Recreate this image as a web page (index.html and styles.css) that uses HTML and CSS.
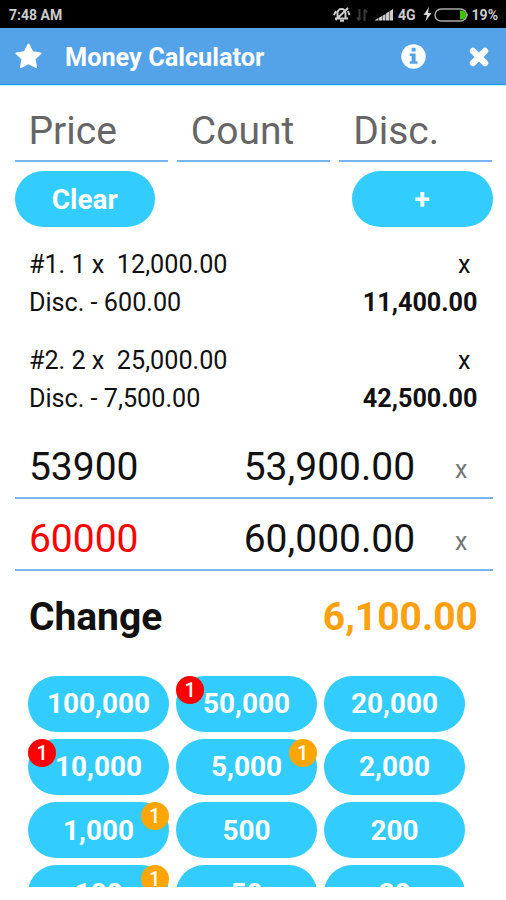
FILE: index.html
```
<!DOCTYPE html>
<html lang="en">
<head>
    <meta charset="UTF-8">
    <meta name="viewport" content="width=device-width, initial-scale=1.0">
    <title>Money Calculator</title>
    <link rel="stylesheet" href="styles.css">
</head>
<body>
    <div class="status-bar">
        <span class="time">7:48 AM</span>
        <div class="status-icons">
            <!-- muted bell -->
            <svg class="icon-mute" width="18" height="17" viewBox="0 0 18 17" fill="none" stroke="#ccc" stroke-width="2">
                <path d="M4.500 12V7a4 4 0 0 1 8 0v5M2 12.500h13M7 14.800h4M2.500 14L15 2M1 9l2-4M16.500 9l-1.500-4"/>
            </svg>
            <!-- mobile data arrows -->
            <svg class="icon-data" width="12" height="14" viewBox="0 0 12 14" fill="none" stroke="#3a3a3a" stroke-width="2">
                <path d="M3.5 1v11M1 9.5l2.5 3M8.500 13V2M11 4.500l-2.500-3"/>
            </svg>
            <!-- signal -->
            <svg class="icon-signal" width="19" height="13" viewBox="0 0 19 13" fill="#ccc">
                <path d="M0 12.500h3.500V10L0 12zM4 12.500h3V8L4 9.700zM7.500 12.500h3V6L7.500 7.700zM11 12.500h3V3.500L11 5.500zM14.500 12.500H18V1l-3.500 2.200z"/>
            </svg>
            <span class="network">4G</span>
            <!-- charging -->
            <svg class="icon-bolt" width="9" height="15" viewBox="0 0 9 15" fill="#ddd">
                <path d="M6 0L.5 8H4l-1.500 6.500L8.500 6H5z"/>
            </svg>
            <svg class="icon-battery" width="35" height="14" viewBox="0 0 35 14">
                <rect x="1" y="1" width="31.500" height="12" rx="6" fill="#000" stroke="#aaa" stroke-width="1.500"/>
                <path d="M26 2.500h1.500a4.500 4.500 0 0 1 0 9H26z" fill="#41c300"/>
                <path d="M33 4.500q1.800 2.500 0 5z" fill="#aaa"/>
            </svg>
            <span class="percent">19%</span>
        </div>
    </div>

    <header class="header">
        <svg class="icon-star" width="27" height="26" viewBox="0 0 27 26" fill="#fff">
            <path d="M13.500 0.500c.5 0 .8.300 1 .8l3.500 7 7.600 1.100c1 .2 1.300.8.600 1.500l-5.600 5.400 1.400 7.800c.1.900-.5 1.300-1.300.9l-7.200-3.700-7.200 3.700c-.8.400-1.400 0-1.300-.9l1.400-7.800-5.600-5.400c-.7-.7-.4-1.300.6-1.500L9 8.300l3.500-7c.2-.5.5-.8 1-.8z"/>
        </svg>
        <h1 class="title">Money Calculator</h1>
        <svg class="icon-info" width="25" height="25" viewBox="0 0 25 25">
            <circle cx="12.500" cy="12.500" r="12.200" fill="#fff"/>
            <path d="M10.600 3.800h4v3.600h-4zM8.700 9.600h5.900v7.700h1.900v2.500H8.700v-2.500h1.900v-5.200H8.700z" fill="#54a3e8"/>
        </svg>
        <svg class="icon-close" width="20" height="20" viewBox="0 0 20 20">
            <path d="M4 4l12 12M16 4L4 16" stroke="#fff" stroke-width="6.400" stroke-linecap="round"/>
        </svg>
    </header>

    <main class="content">
        <div class="inputs">
            <div class="input">Price</div>
            <div class="input">Count</div>
            <div class="input">Disc.</div>
        </div>

        <div class="actions">
            <button class="btn">Clear</button>
            <button class="btn">+</button>
        </div>

        <div class="items">
            <div class="item">
                <div class="row"><span>#1. 1 x&nbsp; 12,000.00</span><span class="remove">x</span></div>
                <div class="row"><span>Disc. - 600.00</span><span class="amount">11,400.00</span></div>
            </div>
            <div class="item">
                <div class="row"><span>#2. 2 x&nbsp; 25,000.00</span><span class="remove">x</span></div>
                <div class="row"><span>Disc. - 7,500.00</span><span class="amount">42,500.00</span></div>
            </div>
        </div>

        <div class="total">
            <span>53900</span>
            <span class="total-value">53,900.00</span>
            <span class="clear">x</span>
        </div>
        <div class="total">
            <span class="paid">60000</span>
            <span class="total-value">60,000.00</span>
            <span class="clear">x</span>
        </div>

        <div class="change">
            <span>Change</span>
            <span class="change-value">6,100.00</span>
        </div>

        <div class="notes">
            <button class="btn">100,000</button>
            <button class="btn">50,000<span class="badge red">1</span></button>
            <button class="btn">20,000</button>
            <button class="btn">10,000<span class="badge red">1</span></button>
            <button class="btn">5,000<span class="badge orange">1</span></button>
            <button class="btn">2,000</button>
            <button class="btn">1,000<span class="badge orange">1</span></button>
            <button class="btn">500</button>
            <button class="btn">200</button>
            <button class="btn">100<span class="badge orange">1</span></button>
            <button class="btn">50</button>
            <button class="btn">20</button>
        </div>
    </main>
</body>
</html>
```

FILE: styles.css
```
:root {
    --header-color: #54a3e8;
    --line-color: #78b4f0;
    --btn-color: #33ccff;
    --text-color: #111;
}

* {
    box-sizing: border-box;
}

body {
    margin: 0;
    height: 900px;
    overflow: hidden;
    background-color: #fff;
    color: var(--text-color);
    font-family: Roboto, sans-serif;
}

/* Status bar */
.status-bar {
    display: flex;
    align-items: center;
    justify-content: space-between;
    height: 28px;
    padding: 1px 8px 0 9px;
    background-color: #000;
    color: #ccc;
    font-size: 14px;
    font-weight: 700;
}

.status-icons {
    display: flex;
    align-items: center;
}

.icon-data {
    margin-left: 5px;
}

.icon-signal {
    margin-left: 7px;
}

.network {
    margin-left: 4px;
}

.icon-bolt {
    margin-left: 7px;
}

.icon-battery {
    margin-left: 2px;
}

.percent {
    margin-left: 3px;
}

/* Header */
.header {
    display: flex;
    align-items: center;
    height: 57px;
    padding: 0 17px 0 15px;
    background-color: var(--header-color);
    border-bottom: 1px solid #2196e8;
    box-shadow: 0 1px 0 #c4f6ff;
    color: #fff;
}

.title {
    flex: 1;
    margin: 3px 0 0 23px;
    font-size: 25.3px;
    font-weight: 700;
}

.icon-close {
    margin: 2px 0 0 43px;
}

/* Content */
.content {
    height: 802px;
    padding: 0 13.5px 0 14.5px;
    overflow: hidden;
}

.inputs {
    display: grid;
    grid-template-columns: repeat(3, 1fr);
    gap: 9px;
}

.input {
    height: 77px;
    padding: 23px 14px 0;
    border-bottom: 2px solid var(--line-color);
    color: #666;
    font-size: 39px;
    line-height: 46px;
}

.actions {
    display: flex;
    justify-content: space-between;
    margin-top: 9px;
}

.btn {
    position: relative;
    width: 140.5px;
    height: 56px;
    padding: 0;
    border: none;
    border-radius: 28px;
    background-color: var(--btn-color);
    color: #fff;
    font-family: inherit;
    font-size: 28px;
    font-weight: 700;
}

/* Item list */
.items {
    padding: 19px 15px 0 14.4px;
    font-size: 25.2px;
}

.item {
    margin-bottom: 20px;
}

.item:last-child {
    margin-bottom: 8.5px;
}

.row {
    display: flex;
    justify-content: space-between;
    line-height: 38px;
}

.remove {
    margin-right: 7px;
}

.amount {
    font-weight: 700;
}

/* Totals */
.total {
    display: flex;
    align-items: center;
    height: 72px;
    padding: 11px 25px 0 14.4px;
    border-bottom: 2px solid var(--line-color);
    font-size: 39px;
}

.paid {
    color: #f00;
}

.total-value {
    margin-left: auto;
}

.clear {
    margin: 4px 0 0 40px;
    color: #777;
    font-size: 25px;
}

.change {
    display: flex;
    justify-content: space-between;
    padding: 23px 14.500px 0 14.4px;
    font-size: 39px;
    font-weight: 700;
    line-height: 46px;
}

.change-value {
    color: #ffa00f;
}

/* Banknote buttons */
.notes {
    display: grid;
    grid-template-columns: repeat(3, 140.5px);
    gap: 7.3px 7.5px;
    margin: 36px 13.8px 0;
}

.badge {
    position: absolute;
    top: 0;
    width: 28px;
    height: 28px;
    border-radius: 50%;
    font-size: 20px;
    font-weight: 500;
    line-height: 28px;
}

.red {
    left: 0;
    background-color: #f00;
}

.orange {
    right: 0;
    background-color: #ffa500;
}
```
